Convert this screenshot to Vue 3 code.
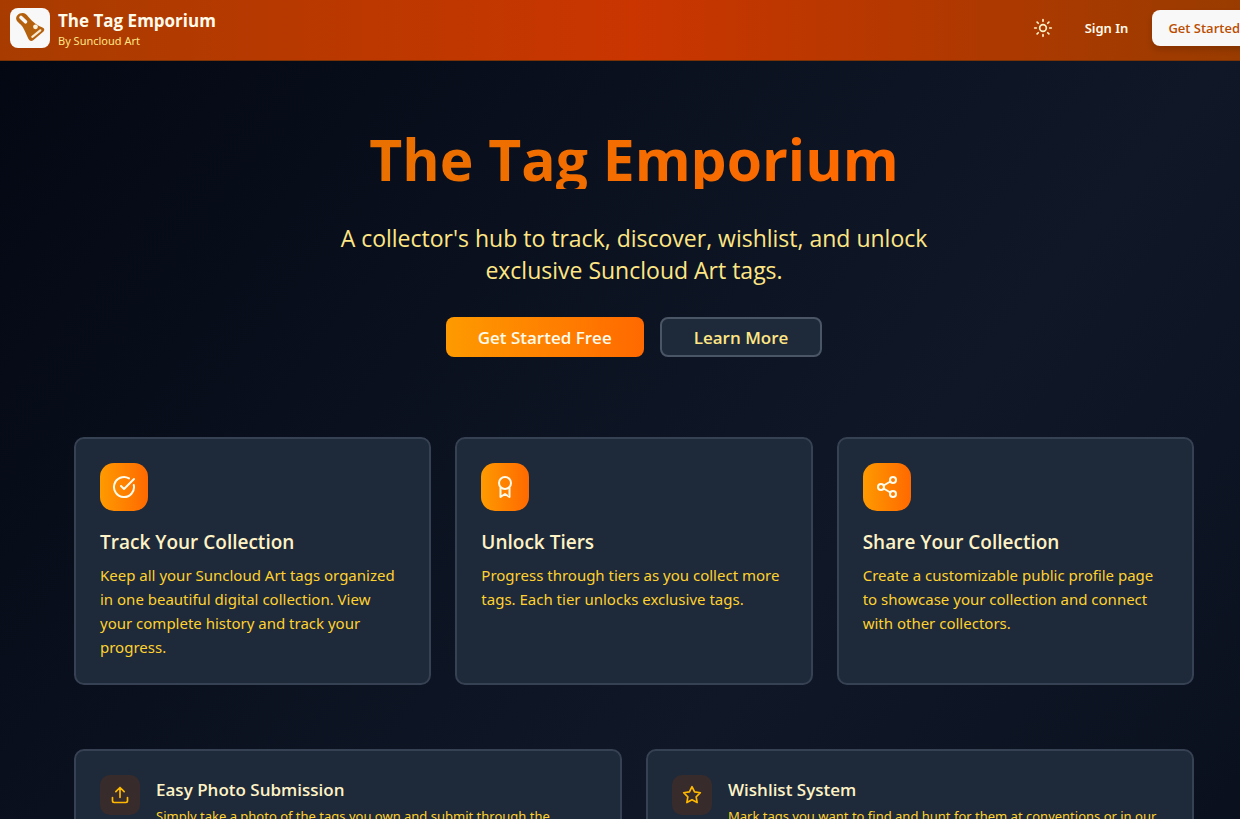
<script setup>
const features = [
  {
    icon: 'check',
    title: 'Track Your Collection',
    text: 'Keep all your Suncloud Art tags organized in one beautiful digital collection. View your complete history and track your progress.',
  },
  {
    icon: 'award',
    title: 'Unlock Tiers',
    text: 'Progress through tiers as you collect more tags. Each tier unlocks exclusive tags.',
  },
  {
    icon: 'share',
    title: 'Share Your Collection',
    text: 'Create a customizable public profile page to showcase your collection and connect with other collectors.',
  },
]

const tools = [
  {
    icon: 'upload',
    title: 'Easy Photo Submission',
    text: 'Simply take a photo of the tags you own and submit through the',
  },
  {
    icon: 'star',
    title: 'Wishlist System',
    text: 'Mark tags you want to find and hunt for them at conventions or in our',
  },
]
</script>

<template>
  <div class="shell">
    <div class="page">
      <header class="topbar">
        <a class="brand" href="#">
          <span class="logo">
            <svg viewBox="0 0 40 40" aria-hidden="true">
              <path d="M12.500 5 C8.500 5 5 8.500 6.500 12 C7.500 14.500 11 16 13 19.500 C15 23 16.500 27 18.500 31 Q20.500 34.500 23.500 32 L33.500 23.500 Q35.500 21 32.500 19.500 C28 18 23 14.500 18.500 9 C16.500 6.500 15 5 12.500 5 Z" fill="#b4600c" />
              <path d="M11 9.500 L15.500 13.800" stroke="#f8f8f8" stroke-width="3.600" stroke-linecap="round" fill="none" />
              <circle cx="25.500" cy="18.800" r="2.400" fill="#fdf3dc" />
              <path d="M22.300 28.800 L30.300 22.300" stroke="#f8ead0" stroke-width="2.200" stroke-linecap="round" fill="none" />
            </svg>
          </span>
          <span class="brand-text">
            <span class="brand-name">The Tag Emporium</span>
            <span class="brand-by">By Suncloud Art</span>
          </span>
        </a>
        <nav class="actions">
          <button class="theme" type="button" aria-label="Toggle theme">
            <svg class="line-icon" viewBox="0 0 24 24" aria-hidden="true">
              <circle cx="12" cy="12" r="4" />
              <path d="M12 2v2M12 20v2M4.930 4.930l1.410 1.410M17.660 17.660l1.410 1.410M2 12h2M20 12h2M6.340 17.660l-1.410 1.410M19.070 4.930l-1.410 1.410" />
            </svg>
          </button>
          <a class="sign-in" href="#">Sign In</a>
          <a class="start" href="#">Get Started</a>
        </nav>
      </header>

      <main class="content">
        <section class="hero">
          <h1>The Tag Emporium</h1>
          <p>A collector's hub to track, discover, wishlist, and unlock exclusive Suncloud Art tags.</p>
          <div class="cta">
            <button class="primary" type="button">Get Started Free</button>
            <button class="secondary" type="button">Learn More</button>
          </div>
        </section>

        <section class="features">
          <article v-for="item in features" :key="item.title" class="card">
            <span class="badge">
              <svg class="line-icon" viewBox="0 0 24 24" aria-hidden="true">
                <template v-if="item.icon === 'check'">
                  <path d="M21.800 10A10 10 0 1 1 17 3.335" />
                  <path d="m9 11 3 3L22 4" />
                </template>
                <template v-else-if="item.icon === 'award'">
                  <circle cx="12" cy="8" r="6" />
                  <path d="M7.500 13v9l4.500-3 4.500 3v-9" />
                </template>
                <template v-else>
                  <circle cx="18" cy="5" r="3" />
                  <circle cx="6" cy="12" r="3" />
                  <circle cx="18" cy="19" r="3" />
                  <path d="m8.590 13.510 6.830 3.980M15.410 6.510l-6.820 3.980" />
                </template>
              </svg>
            </span>
            <h2>{{ item.title }}</h2>
            <p>{{ item.text }}</p>
          </article>
        </section>

        <section class="tools">
          <article v-for="item in tools" :key="item.title" class="card tool">
            <span class="chip">
              <svg class="line-icon" viewBox="0 0 24 24" aria-hidden="true">
                <path v-if="item.icon === 'upload'" d="M12 3v12M17 8l-5-5-5 5M21 15v4a2 2 0 0 1-2 2H5a2 2 0 0 1-2-2v-4" />
                <path v-else d="M12 2l3.090 6.260L22 9.270l-5 4.870 1.180 6.880L12 17.770l-6.180 3.250L7 14.140 2 9.270l6.910-1.010z" />
              </svg>
            </span>
            <div>
              <h3>{{ item.title }}</h3>
              <p>{{ item.text }}</p>
            </div>
          </article>
        </section>
      </main>
    </div>
  </div>
</template>

<style>
html,
body {
  background: #030712;
}
</style>

<style scoped>
.shell {
  height: 100vh;
  overflow: hidden;
  font-family: "Segoe UI", "Open Sans", "Noto Sans", sans-serif;
}

.page {
  width: calc(100% + 28px);
  min-height: 200vh;
  background: linear-gradient(to bottom right, #030712, #101828, #030712);
}

*,
*::before,
*::after {
  box-sizing: border-box;
}

h1,
h2,
h3,
p {
  margin: 0;
}

a {
  text-decoration: none;
}

button {
  font-family: inherit;
  cursor: pointer;
}

.line-icon {
  display: block;
  width: 24px;
  height: 24px;
  fill: none;
  stroke: currentColor;
  stroke-width: 2;
  stroke-linecap: round;
  stroke-linejoin: round;
}

.topbar {
  display: flex;
  align-items: flex-start;
  justify-content: space-between;
  height: 61px;
  padding: 8px 12px 0 10px;
  border-bottom: 1px solid #7b3306;
  background: linear-gradient(to right, #a83c00, #ca3500, #973c00);
}

.brand {
  display: flex;
  gap: 8px;
}

.logo {
  width: 40px;
  height: 40px;
  border-radius: 8px;
  background: #f8f8f8;
}

.logo svg {
  display: block;
  width: 40px;
  height: 40px;
}

.brand-text {
  display: flex;
  flex-direction: column;
}

.brand-name {
  font-size: 17px;
  font-weight: 700;
  line-height: 25px;
  color: #fffbeb;
}

.brand-by {
  font-family: "Segoe UI", "Noto Sans", sans-serif;
  font-size: 11px;
  line-height: 15px;
  color: #fee685;
}

.actions {
  display: flex;
  align-items: center;
  height: 40px;
}

.theme {
  display: flex;
  margin-right: 16px;
  padding: 8px;
  border: 0;
  background: transparent;
  color: #fef3c6;
}

.theme .line-icon {
  width: 20px;
  height: 20px;
}

.sign-in {
  padding: 0 8px;
  font-family: "Segoe UI", "Noto Sans", sans-serif;
  font-size: 13px;
  font-weight: 600;
  color: #fffbeb;
}

.start {
  margin-left: 16px;
  padding: 0 16px;
  border-radius: 8px;
  background: #f8f8f8;
  box-shadow: 0 4px 6px rgba(0, 0, 0, 0.15);
  font-size: 13px;
  font-weight: 600;
  line-height: 36px;
  color: #bb4d00;
}

.content {
  max-width: 1184px;
  margin: 0 auto;
  padding: 64px 32px;
}

.hero {
  display: flex;
  flex-direction: column;
  align-items: center;
  padding-bottom: 80px;
  text-align: center;
}

.hero h1 {
  margin-bottom: 33px;
  padding: 4px 0 0;
  background: linear-gradient(to right, #e97000, #ff6900);
  background-clip: text;
  -webkit-background-clip: text;
  color: transparent;
  font-size: 57px;
  font-weight: 700;
  line-height: 60px;
}

.hero p {
  max-width: 640px;
  margin-bottom: 31px;
  font-size: 23px;
  line-height: 32px;
  color: #fee685;
}

.cta {
  display: flex;
  gap: 16px;
}

.cta button {
  height: 40px;
  padding: 0 32px;
  border: 0;
  border-radius: 8px;
  font-size: 17px;
  font-weight: 600;
}

.cta .primary {
  background: linear-gradient(to right, #fe9a00, #ff6900);
  color: #fffbeb;
}

.cta .secondary {
  border: 2px solid #4a5565;
  background: #1e2939;
  color: #fee685;
}

.features {
  display: grid;
  grid-template-columns: repeat(3, 1fr);
  gap: 24px;
  margin-bottom: 64px;
}

.card {
  padding: 24px;
  border: 2px solid #364153;
  border-radius: 10px;
  background: #1e2939;
}

.badge {
  display: flex;
  align-items: center;
  justify-content: center;
  width: 48px;
  height: 48px;
  margin-bottom: 18px;
  border-radius: 14px;
  background: linear-gradient(to right, #fe9a00, #ff6900);
  color: #fffbeb;
}

.card h2 {
  margin-bottom: 8px;
  font-size: 19px;
  font-weight: 600;
  line-height: 26px;
  color: #fef3c6;
}

.card p {
  font-family: "Segoe UI", "Noto Sans", sans-serif;
  font-size: 15px;
  line-height: 24px;
  color: #ffd230;
}

.tools {
  display: grid;
  grid-template-columns: repeat(2, 1fr);
  gap: 24px;
}

.tool {
  display: flex;
  gap: 16px;
}

.chip {
  display: flex;
  flex: none;
  align-items: center;
  justify-content: center;
  width: 40px;
  height: 40px;
  border-radius: 10px;
  background: #382b2c;
  color: #ffb900;
}

.chip .line-icon {
  width: 20px;
  height: 20px;
}

.tool h3 {
  font-size: 17px;
  font-weight: 600;
  line-height: 30px;
  color: #fef3c6;
}

.tool p {
  font-size: 13px;
  line-height: 22px;
}
</style>
